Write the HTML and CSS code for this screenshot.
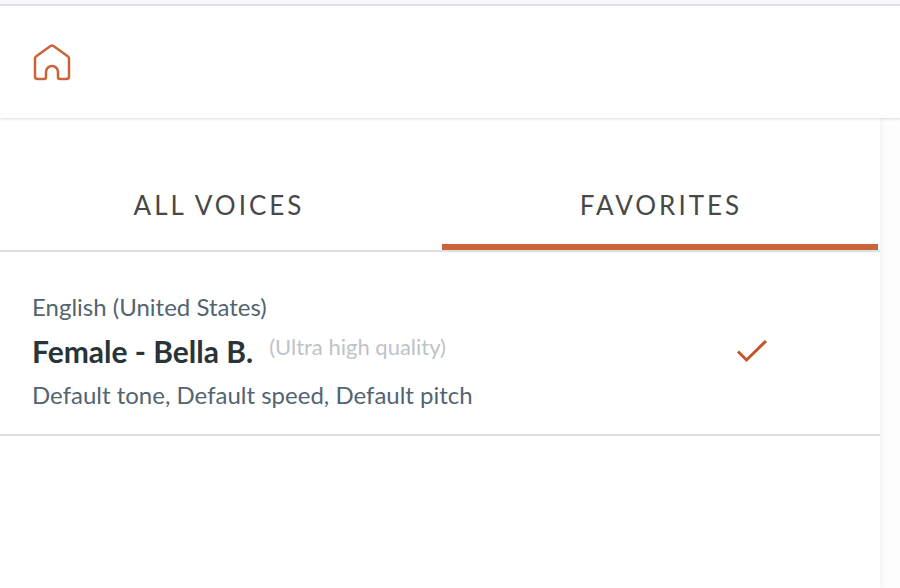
FILE: index.html
```html
<!DOCTYPE html>
<html lang="en">
<head>
<meta charset="utf-8">
<meta name="viewport" content="width=device-width, initial-scale=1">
<title>Voices</title>
<link rel="stylesheet" href="styles.css">
</head>
<body>
<header class="topbar">
  <a class="home" href="#" aria-label="Home">
    <svg class="home-icon" viewBox="0 0 40 40" aria-hidden="true"><path d="M5.500 37h6.500q2 0 2-2v-5a6 6 0 0 1 12 0v5q0 2 2 2h6.500q2.500 0 2.500-2.500V16.500q0-1.200-1-1.900L21.200 3.800q-1.200-.8-2.400 0L4 14.600q-1 .7-1 1.900V34.500q0 2.500 2.500 2.500z"/></svg>
  </a>
</header>
<main class="panel">
  <div class="tabs" role="tablist">
    <button class="tab" type="button" role="tab" aria-selected="false">ALL VOICES</button>
    <button class="tab tab-active" type="button" role="tab" aria-selected="true">FAVORITES</button>
  </div>
  <ul class="voices">
    <li class="voice">
      <div class="details">
        <p class="meta">English (United States)</p>
        <p class="title"><strong class="name">Female - Bella B.</strong><span class="quality">(Ultra high quality)</span></p>
        <p class="meta">Default tone, Default speed, Default pitch</p>
      </div>
      <svg class="check" viewBox="0 0 32 24" aria-hidden="true"><path d="M2 12.500l8.500 8.500L30 2"/></svg>
    </li>
  </ul>
</main>
</body>
</html>
```
FILE: styles.css
```css
* { box-sizing: border-box; }
body {
  display: flex;
  flex-direction: column;
  min-height: 100vh;
  margin: 0;
  background: #fdfdfd;
  font-family: Lato, sans-serif;
  color: #536471;
}
.topbar {
  position: relative;
  padding: 36px 32px;
  border-top: 2px solid #e0e0eb;
  margin-top: 4px;
  background: #fff;
  box-shadow: 0 -4px 0 #f8f8fd, 0 1px 3px rgba(0, 0, 0, 0.14);
}
.home, .home-icon { display: block; width: 40px; height: 40px; }
.home-icon { fill: none; stroke: #ca6338; stroke-width: 2.5; }
.panel {
  flex: 1;
  margin-right: 20px;
  padding-top: 42px;
  background: #fff;
  box-shadow: 0 0 8px rgba(0, 0, 0, 0.08);
}
.tabs {
  display: grid;
  grid-template-columns: 1fr 1fr;
  column-gap: 6px;
  padding-right: 2px;
  border-bottom: 2px solid #dce0e3;
}
.tab {
  height: 90px;
  padding: 6px 0 0 2px;
  border: 0;
  border-bottom: 6px solid transparent;
  background: none;
  color: #484848;
  font: 26px/30px Lato, sans-serif;
  letter-spacing: 3px;
}
.tab-active { border-color: #ca6338; }
.voices { margin: 0; padding: 0; list-style: none; }
.voice {
  display: flex;
  align-items: center;
  justify-content: space-between;
  padding: 33px 112px 17px 32px;
  border-bottom: 2px solid #dedfe0;
}
.meta, .title { margin: 0; line-height: 44px; }
.meta { font-size: 24px; }
.title { display: flex; gap: 16px; }
.name { color: #293338; font-size: 30px; }
.quality { color: #bdc3c8; font-size: 22px; line-height: 36px; }
.check { width: 32px; height: 24px; fill: none; stroke: #c5562b; stroke-width: 3; }
```
